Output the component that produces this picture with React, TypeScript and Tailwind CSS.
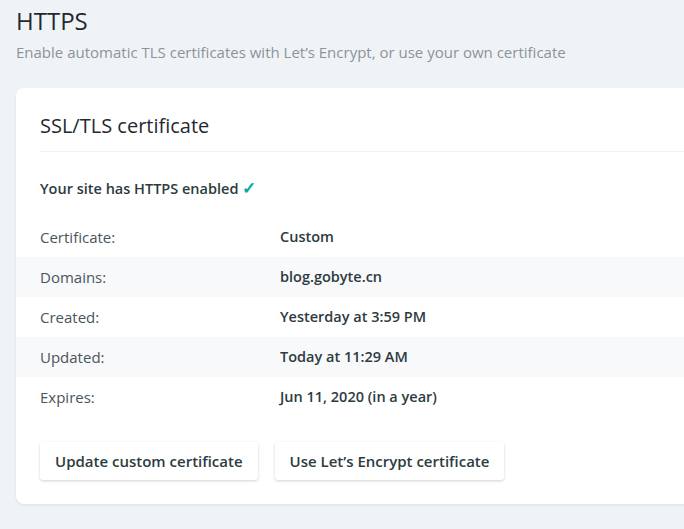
import { Fragment } from 'react'

const rows = [
  { label: 'Certificate:', value: 'Custom' },
  { label: 'Domains:', value: 'blog.gobyte.cn' },
  { label: 'Created:', value: 'Yesterday at 3:59 PM' },
  { label: 'Updated:', value: 'Today at 11:29 AM' },
  { label: 'Expires:', value: 'Jun 11, 2020 (in a year)' },
]

export default function App() {
  return (
    <div
      className="min-h-[529px] w-[684px] overflow-hidden bg-[#f0f3f6] pl-4 pt-[5px] text-[#2d3b41]"
      style={{ fontFamily: '"Segoe UI", "Open Sans", sans-serif' }}
    >
      {/* Page header */}
      <h1 className="text-[24px] leading-[32px] text-[#1f2a30]">HTTPS</h1>
      <p className="mt-[4px] text-[15px] leading-[22px] text-[#8a9499]">
        Enable automatic TLS certificates with Let’s Encrypt, or use your own certificate
      </p>

      {/* Card */}
      <div className="mt-[25px] w-[700px] rounded-l-lg bg-white pb-[24px] shadow-[0_1px_3px_rgba(0,0,0,0.08)]">
        <div className="px-6">
          <h2 className="pt-[24px] pb-[11px] text-[20px] leading-[28px] text-[#1f2a30]">SSL/TLS certificate</h2>
          <div className="h-px bg-[#eef0f2]" />
          <p className="pt-[25px] pb-[17px] text-[14.5px] font-semibold leading-[22px] text-[#2d3b41]">
            Your site has HTTPS enabled <span className="text-[17px] font-bold text-[#00ad9f]">✓</span>
          </p>
        </div>

        <div className="flex flex-col">
          {rows.map((row, i) => (
            <Fragment key={row.label}>
              <div className={`flex h-[40px] items-center px-6 text-[15px] ${i % 2 === 1 ? 'bg-[#f8f9fa]' : ''}`}>
                <span className="w-[240px] text-[#4a555a]">{row.label}</span>
                <span className="text-[14.5px] font-semibold text-[#2d3b41]">{row.value}</span>
              </div>
            </Fragment>
          ))}
        </div>

        <div className="mt-[25px] flex gap-[17px] px-6">
          <button className="h-[38px] rounded-[3px] bg-white px-[15px] text-[15px] font-semibold text-[#2d3b41] shadow-[0_1px_3px_rgba(0,0,0,0.18)]">
            Update custom certificate
          </button>
          <button className="h-[38px] rounded-[3px] bg-white px-[15px] text-[15px] font-semibold text-[#2d3b41] shadow-[0_1px_3px_rgba(0,0,0,0.18)]">
            Use Let’s Encrypt certificate
          </button>
        </div>
      </div>
    </div>
  )
}
